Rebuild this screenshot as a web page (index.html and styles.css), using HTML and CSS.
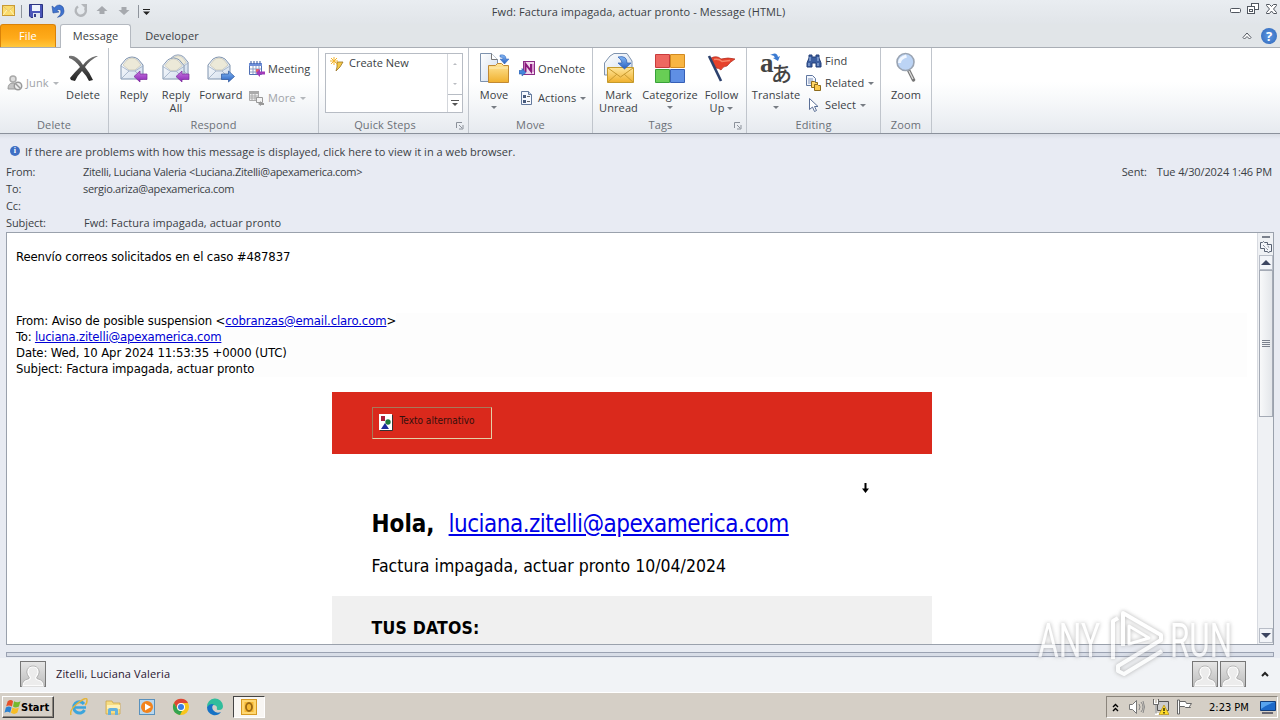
FILE: index.html
```html
<!DOCTYPE html>
<html lang="en">
<head>
    <meta charset="utf-8">
    <title>Fwd: Factura impagada, actuar pronto - Message (HTML)</title>
    <link rel="stylesheet" href="styles.css">
</head>
<body>
    <svg class="defs" width="0" height="0">
        <defs>
            <linearGradient id="paper" x1="0" y1="0" x2="1" y2="1"><stop offset="0" stop-color="#fff"/><stop offset="1" stop-color="#cfdcec"/></linearGradient>
            <linearGradient id="gold" x1="0" y1="0" x2="0" y2="1"><stop offset="0" stop-color="#ffe69a"/><stop offset="1" stop-color="#f0b02d"/></linearGradient>
            <linearGradient id="purple" x1="0" y1="0" x2="0" y2="1"><stop offset="0" stop-color="#c77be0"/><stop offset="1" stop-color="#8a22b5"/></linearGradient>
            <linearGradient id="blue" x1="0" y1="0" x2="0" y2="1"><stop offset="0" stop-color="#84b8f5"/><stop offset="1" stop-color="#2860c0"/></linearGradient>
            <linearGradient id="ink" x1="0" y1="0" x2="0" y2="1"><stop offset="0" stop-color="#777"/><stop offset="1" stop-color="#222"/></linearGradient>
            <linearGradient id="grey" x1="0" y1="0" x2="0" y2="1"><stop offset="0" stop-color="#e6e6e6"/><stop offset="1" stop-color="#bdbdbd"/></linearGradient>
            <symbol id="open-mail" viewBox="0 0 24 24">
                <path d="M1 9 6 3Q12-1 18 3l5 6v14H1z" fill="url(#paper)" stroke="#7f93ae"/>
                <path d="M3 9 7 4q5-4 10 0l4 5-6 5H9z" fill="#ece9d8" stroke="#bdbba9" stroke-width=".6"/>
                <path d="M1 10l8 5h6l8-5M1 23l8-8M23 23l-8-8" fill="none" stroke="#9cacc3" stroke-width=".8"/>
            </symbol>
            <symbol id="person" viewBox="0 0 26 26">
                <rect x=".5" y=".5" width="25" height="25" fill="url(#grey)" stroke="#777"/>
                <path d="M2.500 25q0-5 6-6.500c2-.5 2-2 .8-3.500-3-4-1.500-9.500 3.700-9.500s6.700 5.500 3.700 9.500c-1.200 1.500-1.200 3 .8 3.500q6 1.500 6 6.500z" fill="#ececec" stroke="#fff" stroke-width="1.500"/>
                <path d="M2 25q0-5.500 6-7c2-.5 1.500-1.500.3-3-3-4-1-10 4.700-10s7.700 6 4.700 10c-1.200 1.500-1.700 2.500.3 3q6 1.500 6 7" fill="none" stroke="#999" stroke-width=".7"/>
            </symbol>
            <symbol id="launcher" viewBox="0 0 8 8">
                <path d="M.5 6V.5H6M3 3l3 3M7 3v4H3" fill="none" stroke="#8b919a"/>
            </symbol>
        </defs>
    </svg>

    <div class="window">
        <header class="titlebar">
            <div class="quick-access">
                <svg width="16" height="14" viewBox="0 0 16 14"><rect x="2.500" y="1.500" width="12" height="10" fill="#fbdc6c" stroke="#c99a32"/><path d="M3 2l5.500 5L14 2M3 11l4-5M14 11l-4-5" fill="none" stroke="#fff3bd"/><path d="M3 2l5.500 5L14 2" fill="none" stroke="#cf9d35" stroke-width=".6"/></svg>
                <i class="divider"></i>
                <svg class="save" width="14" height="14" viewBox="0 0 14 14"><path d="M.5.5h13v13H2l-1.500-1.500z" fill="#4a55b8" stroke="#2b3481"/><path d="M3 1h8v6H3z" fill="#eef3fc"/><path d="M4 9h7v5H4z" fill="#dfe5ef"/><path d="M5 10h2v3H5z" fill="#333c87"/></svg>
                <svg class="undo" width="14" height="14" viewBox="0 0 14 14"><path d="M1 2l1 7 6-1-2.300-1.700Q10 4 10 8q0 3-3.500 5.300Q13 12 13 7q0-5-4-6-3-.6-5.600 2.800z" fill="#3f73cf" stroke="#2a50a0" stroke-width=".6"/></svg>
                <svg class="redo" width="14" height="14" viewBox="0 0 14 14"><path d="M4 2.500A5 5 0 1 0 11 4" fill="none" stroke="#b3b6ba" stroke-width="2.500"/><path d="M7 0h6v6z" fill="#b3b6ba"/></svg>
                <svg class="up" width="12" height="12" viewBox="0 0 12 12"><path d="M6 1l5.500 5H8.500v3h-5V6H.5z" fill="#a6a9ae"/></svg>
                <svg class="down" width="12" height="12" viewBox="0 0 12 12"><path d="M6 10l5.500-5H8.500V2h-5v3H.5z" fill="#a6a9ae"/></svg>
                <i class="divider"></i>
                <svg class="customize" width="7" height="6" viewBox="0 0 7 6"><path d="M0 0h7v1H0zM0 2.500h7L3.500 6z" fill="#222"/></svg>
            </div>
            <h1 class="caption">Fwd: Factura impagada, actuar pronto - Message (HTML)</h1>
            <div class="window-buttons">
                <svg width="47" height="12" viewBox="0 0 47 12" fill="#fff" stroke="#50565f"><rect x=".5" y="5.500" width="10" height="4" rx="1"/><rect x="21.500" y=".5" width="7" height="6"/><rect x="17.500" y="3.500" width="7" height="7"/><rect x="19.500" y="6.500" width="3" height="2"/><path d="M36.500 1.500h3l2 2 2-2h3v1l-3 3.500 3 3.500v1h-3l-2-2.500-2 2.500h-3v-1l3-3.500-3-3.500z"/></svg>
            </div>
        </header>

        <nav class="tabs">
            <a class="tab file">File</a>
            <a class="tab active">Message</a>
            <a class="tab developer">Developer</a>
            <div class="tab-tools">
                <svg width="10" height="8" viewBox="0 0 10 8"><path d="M1 5.500 5 1l4 4.500-1.500 1.500L5 4.500 2.500 7z" fill="#fff" stroke="#50565f"/></svg>
                <span class="help">?</span>
            </div>
        </nav>

        <section class="ribbon">
            <div class="group g-delete">
                <div class="tools">
                    <div class="stack single">
                        <div class="small disabled">
                            <svg width="16" height="16" viewBox="0 0 16 16"><circle cx="6" cy="4" r="3" fill="#ddd" stroke="#aaa" stroke-width="1.500"/><path d="M1 14q0-6 5-6t5 6z" fill="#c4c4c4" stroke="#999"/><circle cx="11" cy="11" r="3.700" fill="#eee" stroke="#999" stroke-width="1.500"/><path d="M8.500 8.500l5 5" stroke="#999" stroke-width="1.500"/></svg>
                            <span>Junk</span><i class="caret"></i>
                        </div>
                    </div>
                    <div class="big w-delete">
                        <svg width="32" height="32" viewBox="0 0 32 32"><path d="M2 4q4-1 8 2 4 3 6 7 5-7 13-9h2Q23 8 18 15q5 6 8 13l-4 1q-3-6-7-10-5 5-7 10l-4-1-1-2Q7 21 13 15 8 8 2 6z" fill="url(#ink)"/></svg>
                        <span>Delete</span>
                    </div>
                </div>
                <h2>Delete</h2>
            </div>

            <div class="group g-respond">
                <div class="tools">
                    <div class="big w-reply">
                        <svg width="32" height="32" viewBox="0 0 32 32"><use href="#open-mail" x="2" y="4" width="24" height="24"/><path d="M16 24.500l6-5.500v3h7v5.500h-7V30z" fill="url(#purple)" stroke="#7a2b9a" stroke-width=".7"/></svg>
                        <span>Reply</span>
                    </div>
                    <div class="big w-all">
                        <svg width="32" height="32" viewBox="0 0 32 32"><use href="#open-mail" x="7" y="2" width="22" height="22"/><use href="#open-mail" x="2" y="5" width="23" height="23"/><path d="M16 24.500l6-5.500v3h7v5.500h-7V30z" fill="url(#purple)" stroke="#7a2b9a" stroke-width=".7"/></svg>
                        <span>Reply<br>All</span>
                    </div>
                    <div class="big w-forward">
                        <svg width="32" height="32" viewBox="0 0 32 32"><use href="#open-mail" x="2" y="4" width="24" height="24"/><path d="M29.500 24.500l-6-5.500v3h-7v5.500h7V30z" fill="url(#blue)" stroke="#2c5499" stroke-width=".7"/></svg>
                        <span>Forward</span>
                    </div>
                    <div class="stack double">
                        <div class="small">
                            <svg width="16" height="16" viewBox="0 0 16 16"><path d="M.5 2.500h12v11H.5z" fill="#fff" stroke="#5070b4"/><path d="M0 2h13v3H0z" fill="#6f8fd8"/><path d="M2 0v3M5 0v3M8 0v3M11 0v3" stroke="#34549b"/><path d="M1 8h11M1 11h9M4 5v8M7 5v8M10 5v5" stroke="#8ea0c5"/><path d="M7 8h3v3H7z" fill="#e0626a"/><path d="M7 12l4-4v2.500h5v3h-5V16z" fill="#a23bb8"/></svg>
                            <span>Meeting</span>
                        </div>
                        <div class="small disabled">
                            <svg width="16" height="16" viewBox="0 0 16 16"><path d="M.5 2.500h9v8h-9z" fill="#eee" stroke="#aaa"/><path d="M0 1h10v3H0z" fill="#aaa"/><path d="M1 6h8M1 8h8M3 4v6M6 4v6" stroke="#aaa"/><path d="M7.500 7.500h6v5h-6z" fill="#f3f3f3" stroke="#999"/><path d="M9 14l3-3v2h3v2h-3v1z" fill="#999"/></svg>
                            <span>More</span><i class="caret"></i>
                        </div>
                    </div>
                </div>
                <h2>Respond</h2>
            </div>

            <div class="group g-steps">
                <div class="tools">
                    <div class="gallery">
                        <div class="gallery-item">
                            <svg width="14" height="14" viewBox="0 0 14 14"><path d="M7 5h6l-3 5-4 4 1-4z" fill="#f6c948" stroke="#9b7424" stroke-width=".8"/><path d="M4 0v8M0 4h8M1 1l6 6M7 1L1 7" stroke="#f3b42d"/></svg>
                            <span>Create New</span>
                        </div>
                        <div class="gallery-scroll"><i class="arrow-up"></i><i class="arrow-down"></i><i class="arrow-more"></i></div>
                    </div>
                </div>
                <h2>Quick Steps</h2>
                <svg class="launcher" width="8" height="8"><use href="#launcher"/></svg>
            </div>

            <div class="group g-move">
                <div class="tools">
                    <div class="big w-reply">
                        <svg width="32" height="32" viewBox="0 0 32 32"><path d="M2.500 1.500h11l6 6v22h-17z" fill="url(#paper)" stroke="#7d92ae"/><path d="M13.500 1.500v6h6" fill="#fff" stroke="#777"/><path d="M10.500 13.500h7l2-2h4l2 2h5v17h-20z" fill="url(#gold)" stroke="#c18933"/><path d="M11 16h19" stroke="#ffedb7"/><path d="M22 3q6-1 6 4h3l-4.500 5L22 7h3q0-2-3-2z" fill="url(#blue)" stroke="#2d61b8" stroke-width=".5"/></svg>
                        <span>Move</span><i class="caret"></i>
                    </div>
                    <div class="stack double">
                        <div class="small">
                            <svg width="16" height="16" viewBox="0 0 16 16"><rect x="4.500" y=".5" width="11" height="13" fill="#f2d6ec" stroke="#8c2d86"/><path d="M6.500 11V3L12 10V3" fill="none" stroke="#8b197d" stroke-width="2"/><path d="M14 3v8" stroke="#bd5bb5"/><path d="M0 9.500h3V7.500l4 4L3 15v-2H0z" fill="#4585db" stroke="#285baa" stroke-width=".6"/></svg>
                            <span>OneNote</span>
                        </div>
                        <div class="small">
                            <svg width="16" height="16" viewBox="0 0 16 16"><path d="M2.500 1.500h7l3 3v10h-10z" fill="#f6f9ff" stroke="#63799c"/><path d="M4 5h3v3H4zM4 10h3v3H4z" fill="#485b7d"/><path d="M8 6.500h3M8 11.500h3" stroke="#666"/><path d="M9.500 1.500v3h3" fill="#c3d3ea" stroke="#63799c"/></svg>
                            <span>Actions</span><i class="caret"></i>
                        </div>
                    </div>
                </div>
                <h2>Move</h2>
            </div>

            <div class="group g-tags">
                <div class="tools">
                    <div class="big w-unread">
                        <svg width="32" height="32" viewBox="0 0 32 32"><path d="M1.500 11 7 4l4-2.500h13l5 7.500v14h-27.500z" fill="url(#paper)" stroke="#7f93ae"/><path d="M4.500 15.500h26v15h-26z" fill="url(#gold)" stroke="#c59a2b"/><path d="M5 16l12.500 9L30 16M5 30l9-8M30 30l-9-8" fill="none" stroke="#c99b31"/><path d="M15 5q9-2 9 6h4l-6.500 6L15 11h4q0-3-4-6z" fill="url(#blue)" stroke="#2b5cb0" stroke-width=".7"/></svg>
                        <span>Mark<br>Unread</span>
                    </div>
                    <div class="big w-categorize">
                        <svg width="32" height="32" viewBox="0 0 32 32"><path d="M1.500 2.500h14v13h-14z" fill="#ee6861" stroke="#c93c3c"/><path d="M16.500 2.500h14v13h-14z" fill="#f8b543" stroke="#d28a20"/><path d="M1.500 17.500h14v13h-14z" fill="#68ce55" stroke="#38a13a"/><path d="M16.500 17.500h14v13h-14z" fill="#5f8fe4" stroke="#355fb6"/></svg>
                        <span>Categorize</span><i class="caret"></i>
                    </div>
                    <div class="big w-unread">
                        <svg width="32" height="32" viewBox="0 0 32 32"><path d="M5 6q6-3 10 1 7-2 14 0-5 3-8 7-4 0-6 4-2-2-5-2z" fill="#e6422c" stroke="#ae2a1c" stroke-width=".7"/><path d="M8 7.500q5-1 8 2l8-1" fill="none" stroke="#f7866a" stroke-width="1.500"/><path d="M3 4l12 25" stroke="#2c416d" stroke-width="2.600"/></svg>
                        <span>Follow<br>Up <i class="caret"></i></span>
                    </div>
                </div>
                <h2>Tags</h2>
                <svg class="launcher" width="8" height="8"><use href="#launcher"/></svg>
            </div>

            <div class="group g-editing">
                <div class="tools">
                    <div class="big w-translate">
                        <svg class="translate" width="32" height="32" viewBox="0 0 32 32"><text class="latin" x="0" y="20">a</text><text class="kana" x="11" y="29">あ</text><path d="M10 3q7-4 8 2l2-1-2 5-5-3 2-.5q-1-3-5-2.500z" fill="#3b7bd2"/></svg>
                        <span>Translate</span><i class="caret"></i>
                    </div>
                    <div class="stack triple">
                        <div class="small">
                            <svg width="16" height="16" viewBox="0 0 16 16"><path d="M3 2h3v2h4V2h3v3l2 5v4h-5v-4H6v4H1v-4l2-5z" fill="#3c5e9f" stroke="#233f78"/><path d="M4 4v4M12 4v4M3 10v3M12 10v3" stroke="#a9c4ee"/></svg>
                            <span>Find</span>
                        </div>
                        <div class="small">
                            <svg width="16" height="16" viewBox="0 0 16 16"><path d="M.5.5h6l3 3v7h-9z" fill="#f2f6fd" stroke="#6077a0"/><path d="M2 4h5M2 6h5M2 8h5" stroke="#7c91b8"/><path d="M5.500 6.500h3l1 1h2v5h-6z" fill="#ffd668" stroke="#8c6a1b"/><path d="M8.500 9.500h3l1 1h2v5h-6z" fill="#fbc94c" stroke="#8c6a1b"/></svg>
                            <span>Related</span><i class="caret"></i>
                        </div>
                        <div class="small">
                            <svg width="16" height="16" viewBox="0 0 16 16"><path d="M3.500 1.500v11l3-2.500 2 4.500 2-1-2-4h3.500z" fill="#fff" stroke="#5a6f96"/></svg>
                            <span>Select</span><i class="caret"></i>
                        </div>
                    </div>
                </div>
                <h2>Editing</h2>
            </div>

            <div class="group g-zoom">
                <div class="tools">
                    <div class="big w-zoom">
                        <svg width="32" height="32" viewBox="0 0 32 32"><path d="M18.500 18l5 10" stroke="#777" stroke-width="3.500" stroke-linecap="round"/><path d="M19 19l4 8" stroke="#ddd" stroke-width="1.200"/><circle cx="15.500" cy="10" r="8.500" fill="#bcd4f5" stroke="#9aa4b2" stroke-width="1.600"/><path d="M9.500 11q0-5 7-7" fill="none" stroke="#f1f7ff" stroke-width="3"/></svg>
                        <span>Zoom</span>
                    </div>
                </div>
                <h2>Zoom</h2>
            </div>
        </section>

        <section class="headers">
            <div class="infobar"><span class="info">i</span><span>If there are problems with how this message is displayed, click here to view it in a web browser.</span></div>
            <dl>
                <dt>From:</dt><dd class="sender">Zitelli, Luciana Valeria &lt;Luciana.Zitelli@apexamerica.com&gt;</dd>
                <dt>To:</dt><dd class="recipient">sergio.ariza@apexamerica.com</dd>
                <dt>Cc:</dt><dd></dd>
                <dt>Subject:</dt><dd class="subject">Fwd: Factura impagada, actuar pronto</dd>
            </dl>
            <div class="sent"><span>Sent:</span><span>Tue 4/30/2024 1:46 PM</span></div>
        </section>

        <main class="message">
            <div class="message-body">
                <p class="intro">Reenvío correos solicitados en el caso #487837</p>
                <div class="forwarded">
                    <p><span class="mask">From: Aviso de posible suspension &lt;<a>cobranzas@email.claro.com</a>&gt;</span></p>
                    <p><span class="mask fw-to">To: <a>luciana.zitelli@apexamerica.com</a></span></p>
                    <p><span class="mask">Date: Wed, 10 Apr 2024 11:53:35 +0000 (UTC)</span></p>
                    <p><span class="mask">Subject: Factura impagada, actuar pronto</span></p>
                </div>
                <div class="letter">
                    <div class="banner">
                        <div class="alt-image">
                            <svg width="14" height="17" viewBox="0 0 14 17"><path d="M0 0h13v16H0z" fill="#fff"/><path d="M13.500 1v15.500H1" fill="none" stroke="#333"/><path d="M2 2h4v5H2z" fill="#a8203a"/><circle cx="9" cy="8" r="2.700" fill="#1e7a3c"/><path d="M6 9l4 6H2z" fill="#1c2b9b"/></svg>
                            <span>Texto alternativo</span>
                        </div>
                    </div>
                    <p class="greeting"><b>Hola,</b><a>luciana.zitelli@apexamerica.com</a></p>
                    <p class="notice">Factura impagada, actuar pronto 10/04/2024</p>
                    <div class="data"><b>TUS DATOS:</b></div>
                </div>
            </div>
            <div class="scrollbar">
                <i class="split"></i>
                <svg class="select-object" width="14" height="14" viewBox="0 0 14 14"><path d="M1.500 2.500h2l1-1 1 1h3v2h4v7h-2l-1 1.500-1-1.500h-3v-3h-4z" fill="#f3f5f9" stroke="#596273"/><path d="M4 5l5 5M8 4l2 4" stroke="#596273" stroke-dasharray="1 1"/></svg>
                <i class="sb-button"><i class="sb-up"></i></i>
                <i class="thumb"><i class="grip"></i></i>
                <i class="sb-button last"><i class="sb-down"></i></i>
            </div>
        </main>

        <div class="splitter"></div>

        <footer class="people">
            <svg width="26" height="26"><use href="#person"/></svg>
            <span class="person-name">Zitelli, Luciana Valeria</span>
            <div class="people-right">
                <svg width="26" height="26"><use href="#person"/></svg>
                <svg width="26" height="26"><use href="#person"/></svg>
                <svg class="expand" width="8" height="6" viewBox="0 0 8 6"><path d="M1 5l3-3 3 3" fill="none" stroke="#222" stroke-width="2"/></svg>
            </div>
        </footer>

        <footer class="taskbar">
            <div class="start">
                <svg width="17" height="16" viewBox="0 0 15 15"><path d="M3 2q3-2 5 0L7 7Q4 5 1.500 7z" fill="#e65129"/><path d="M9 2q3 2 6 0l-1.500 5Q10 9 8 7z" fill="#75b82d"/><path d="M1.300 8q3-2 5.300 0l-1.300 5Q3 11 0 13z" fill="#2c82d1"/><path d="M7.500 8q3 2 6 0L12 13q-3 2-6 0z" fill="#f7bd26"/></svg>
                <b>Start</b>
            </div>
            <div class="task-icons">
                <svg width="18" height="18" viewBox="0 0 18 18"><path d="M14 6A5.700 5.700 0 1 0 14.500 12" fill="none" stroke="#3ba5dc" stroke-width="3"/><path d="M4 9.500h12" stroke="#3ba5dc" stroke-width="2.500"/><path d="M1 17Q-1 12 8 5t9-3-2 5" fill="none" stroke="#e5b53a" stroke-width="1.500"/></svg>
                <svg width="18" height="18" viewBox="0 0 18 18"><path d="M2 3h6l1 2h7v11H2z" fill="#f6dd83" stroke="#cda64a" stroke-width=".8"/><path d="M3 7h13v4H3z" fill="#fff1b6"/><path d="M4 17v-5q0-2 2-2h6q2 0 2 2v5h-3v-4H7v4z" fill="#64b1dd"/></svg>
                <svg width="18" height="18" viewBox="0 0 18 18"><rect x="1.500" y="1.500" width="15" height="15" fill="#b9d7ee" stroke="#5991bd"/><circle cx="9" cy="9" r="6" fill="#f2831d"/><path d="M7 5.500v7l6-3.500z" fill="#fff"/></svg>
                <svg width="18" height="18" viewBox="0 0 18 18"><circle cx="9" cy="9" r="8" fill="#f8c51c"/><path d="M2 5a8 8 0 0 1 14 0H9L5.500 11z" fill="#de4636"/><path d="M2 5l4 7 4 1-2 4A8 8 0 0 1 2 5z" fill="#33a451"/><circle cx="9" cy="9" r="4" fill="#fff"/><circle cx="9" cy="9" r="3" fill="#397ee4"/></svg>
                <svg width="18" height="18" viewBox="0 0 18 18"><path d="M1 9A8 8 0 0 1 17 8q0 4-4 4-3 0-2-2 0-3-4-3-4 0-6 2z" fill="#31bd9c"/><path d="M1 9q3-4 7-2.500Q5 8 7 12q3 4 8 2Q12 18 7 17 1 15 1 9z" fill="#1672c5"/></svg>
                <div class="task-active">
                    <svg width="18" height="18" viewBox="0 0 18 18"><rect x="1.500" y="1.500" width="15" height="15" fill="#ffd771" stroke="#d79a22"/><rect x="4.500" y="4" width="9" height="10" fill="#f6b934"/><ellipse cx="9" cy="9" rx="3" ry="4" fill="none" stroke="#9b6814" stroke-width="1.800"/></svg>
                </div>
            </div>
            <div class="tray">
                <svg class="t-chevron" width="7" height="9" viewBox="0 0 7 9"><path d="M1 4l2.500-2.500L6 4M1 8l2.500-2.500L6 8" fill="none" stroke="#000" stroke-width="1.400"/></svg>
                <svg class="t-volume" width="16" height="14" viewBox="0 0 16 14"><path d="M.5 4.500h3l4-4v13l-4-4h-3z" fill="#fff" stroke="#777"/><path d="M10 4q2 3 0 6M12 2q4 5 0 10M14 1q3 6 0 12" fill="none" stroke="#888"/></svg>
                <svg class="t-network" width="16" height="16" viewBox="0 0 16 16"><path d="M4.500 2.500h11v9h-11z" fill="#ccc" stroke="#555"/><path d="M1 1v4h4V1M3 5v10h5" fill="none" stroke="#fff" stroke-width="2"/><path d="M.5 0v5.500h5V0M3 6v8.500" fill="none" stroke="#444" stroke-width=".8"/><path d="M11 6l5 9.500H6z" fill="#ffdc27" stroke="#b38c12" stroke-width=".7"/><path d="M11 9v3M11 13v1.500" stroke="#000" stroke-width="1.200"/></svg>
                <svg class="t-flag" width="16" height="16" viewBox="0 0 16 16"><path d="M.5 1v14h2V1z" fill="#fff" stroke="#666"/><path d="M2.500 2.500h6l1 2h5l-2 3 1 1h-5l-1-1h-5z" fill="#fff" stroke="#666"/></svg>
                <span class="clock">2:23 PM</span>
                <svg class="t-desktop" width="16" height="13" viewBox="0 0 16 13"><path d="M.5.500h15v9H.5z" fill="#1c69c9" stroke="#123d7a"/><path d="M1 1h14Q8 3 1 8z" fill="#57a3ee"/><path d="M2 12h11" stroke="#445" stroke-width="1.500"/></svg>
            </div>
        </footer>

        <svg class="pointer" width="7" height="10" viewBox="0 0 7 10"><path d="M2.500 0h2v5.500H7L3.500 10 0 5.500h2.500z" fill="#000"/></svg>

        <svg class="watermark" width="200" height="76" viewBox="0 0 200 76">
            <text x="2" y="51" textLength="62" lengthAdjust="spacingAndGlyphs">ANY</text>
            <path d="M82 12l-5 3v38" class="mark"/>
            <path d="M87 40V7l38 22v5L82 60v5l6 3 38-23" class="mark"/>
            <path d="M93 38V20l20 12z" class="mark thin"/>
            <text x="134" y="51" textLength="62" lengthAdjust="spacingAndGlyphs">RUN</text>
        </svg>
    </div>
</body>
</html>
```

FILE: styles.css
```css
* {
    box-sizing: border-box;
}
body {
    margin: 0;
    background-color: #e8ebf2;
    color: #3b3f45;
    font: 11px "Segoe UI", "Open Sans", sans-serif;
}
h1, h2, p, dl, dd {
    margin: 0;
    font-weight: normal;
}
svg {
    display: block;
    flex: none;
}
i {
    display: block;
    flex: none;
}
.defs {
    position: absolute;
}
.window {
    position: relative;
    display: flex;
    flex-direction: column;
    width: 1280px;
    height: 720px;
    overflow: hidden;
}

/* title bar */
.titlebar {
    display: grid;
    grid-template-columns: 240px 1fr 240px;
    height: 24px;
    background: linear-gradient(#e9edf1, #e1e5e9);
}
.quick-access {
    display: flex;
    align-items: center;
    height: 22px;
}
.divider {
    width: 1px;
    height: 13px;
    margin-left: 5px;
    background-color: #8e949c;
}
.save { margin-left: 7px; }
.undo { margin-left: 8px; }
.redo { margin-left: 9px; }
.up { margin-left: 8px; }
.down { margin-left: 10px; }
.quick-access .down + .divider { margin-left: 8px; }
.customize { margin: 2px 0 0 4px; }
.caption {
    font-size: 11px;
    line-height: 24px;
    text-align: center;
    letter-spacing: 0.1px;
    white-space: nowrap;
    padding-right: 3px;
}
.window-buttons {
    display: flex;
    justify-content: flex-end;
    padding: 3px 3px 0 0;
}

/* tabs */
.tabs {
    display: flex;
    height: 24px;
    border-bottom: 1px solid #a9aeb5;
    background: #e1e5e8;
}
.tab {
    height: 23px;
    line-height: 23px;
    text-align: center;
    letter-spacing: 0.1px;
}
.tab.file {
    width: 56px;
    border: 1px solid #d98209;
    border-bottom: 0;
    border-radius: 3px 3px 0 0;
    background: linear-gradient(#f79c0c, #ffab1a 60%, #ffc83e);
    color: #fff;
    line-height: 21px;
}
.tab.active {
    width: 71px;
    height: 24px;
    margin-left: 4px;
    border: 1px solid #b4b9c0;
    border-bottom: 0;
    border-radius: 3px 3px 0 0;
    background: #fff;
    line-height: 21px;
}
.tab.developer {
    width: 82px;
}
.tab-tools {
    display: flex;
    align-items: center;
    gap: 9px;
    margin-left: auto;
    padding-right: 3px;
}
.help {
    width: 16px;
    height: 16px;
    border-radius: 50%;
    background: radial-gradient(#5d97e2, #2e66b9);
    color: #fff;
    font-size: 13px;
    font-weight: bold;
    line-height: 16px;
    text-align: center;
}

/* ribbon */
.ribbon {
    display: flex;
    height: 86px;
    border-bottom: 1px solid #8b919b;
    background: linear-gradient(#fff 40%, #f5f7f9 65%, #e6eaef);
}
.group {
    position: relative;
    display: flex;
    flex-direction: column;
    border-right: 1px solid #c0c5cc;
}
.group h2 {
    height: 16px;
    font-size: 11px;
    line-height: 15px;
    text-align: center;
    color: #6b7077;
    letter-spacing: 0.15px;
}
.g-delete { width: 109px; }
.g-respond { width: 210px; }
.g-steps { width: 150px; }
.g-steps h2 { padding-right: 17px; }
.g-move { width: 124px; }
.g-tags { width: 154px; }
.g-tags h2 { padding-right: 18px; }
.g-editing { width: 134px; }
.g-zoom { width: 51px; }
.tools {
    display: flex;
    height: 69px;
    padding: 4px 0 0 5px;
}
.g-editing .tools { padding-left: 3px; }
.g-zoom .tools { padding-left: 0; }
.big {
    display: flex;
    flex-direction: column;
    align-items: center;
    line-height: 13px;
    text-align: center;
    white-space: nowrap;
    letter-spacing: 0.1px;
}
.big > span {
    margin-top: 4px;
}
.big > .caret {
    margin-top: 5px;
}
.w-delete { width: 42px; }
.w-reply { width: 40px; }
.w-all { width: 44px; }
.w-forward { width: 46px; }
.w-unread { width: 41px; }
.w-categorize { width: 62px; }
.w-translate { width: 52px; }
.w-zoom { width: 50px; }
.caret {
    border: 3px solid transparent;
    border-top-color: #777c83;
    border-bottom: 0;
}
.big span .caret {
    display: inline-block;
    vertical-align: 2px;
}
.stack {
    display: flex;
    flex-direction: column;
    margin-left: 5px;
}
.single { width: 55px; margin-left: 2px; padding-top: 23px; }
.double { gap: 13px; padding-top: 9px; }
.triple { gap: 6px; padding-top: 1px; margin-left: 4px; }
.small {
    display: flex;
    align-items: center;
    height: 16px;
    white-space: nowrap;
    letter-spacing: 0.1px;
}
.small span {
    margin: -2px 0 0 3px;
}
.small .caret {
    margin-left: 4px;
}
.disabled {
    color: #a0a3a8;
}
.disabled .caret {
    border-top-color: #b4b7bb;
}
.translate, .watermark {
    overflow: visible;
}
.latin {
    font: bold 27px "Liberation Serif", serif;
    letter-spacing: 0;
    fill: #444;
}
.kana {
    font: 500 21px "Noto Sans CJK JP", sans-serif;
    letter-spacing: 0;
    fill: #444;
}
.gallery {
    display: flex;
    width: 138px;
    height: 60px;
    margin-top: 1px;
    margin-left: 1px;
    border: 1px solid #b7bcc4;
    background: #fff;
}
.gallery-item {
    display: flex;
    flex: 1;
    gap: 5px;
    padding: 3px 0 0 4px;
    line-height: 12px;
}
.gallery-scroll {
    display: grid;
    grid-template-rows: 20px 20px 18px;
    width: 15px;
    border-left: 1px solid #d3d6db;
    justify-items: center;
    align-items: center;
}
.arrow-up, .arrow-down {
    border: 2px solid transparent;
    border-bottom-color: #b9bcc1;
    border-top: 0;
}
.arrow-down {
    border-top: 2px solid #b9bcc1;
    border-bottom: 0;
}
.arrow-more {
    position: relative;
    width: 100%;
    height: 100%;
    border-top: 1px solid #b7bcc4;
}
.arrow-more::before {
    content: "";
    position: absolute;
    left: 4px;
    top: 8px;
    border: 3px solid transparent;
    border-top-color: #555;
    border-bottom: 0;
}
.arrow-more::after {
    content: "";
    position: absolute;
    left: 3px;
    top: 5px;
    width: 8px;
    height: 1px;
    background: #555;
}
.launcher {
    position: absolute;
    right: 4px;
    bottom: 3px;
}

/* message headers */
.headers {
    position: relative;
    height: 98px;
    padding: 9px 0 0 6px;
    background: linear-gradient(#d9dde5, #e8ebf3 5px);
}
.infobar {
    display: flex;
    align-items: center;
    gap: 5px;
    height: 16px;
    padding-left: 4px;
    letter-spacing: 0.04px;
}
.info {
    width: 10px;
    height: 10px;
    border-radius: 50%;
    background: #3f6fc4;
    color: #fff;
    font: bold 8px/10px "Liberation Serif", serif;
    text-align: center;
}
.headers dl {
    display: grid;
    grid-template-columns: 77px 1fr;
    margin-top: 4px;
    grid-auto-rows: 17px;
    line-height: 17px;
}
.sender, .recipient {
    letter-spacing: -0.3px;
}
.subject {
    padding-left: 1px;
    letter-spacing: 0.06px;
}
.headers dt {
    letter-spacing: -0.1px;
}
.sent {
    position: absolute;
    right: 8px;
    top: 29px;
    display: flex;
    gap: 10px;
    line-height: 17px;
    letter-spacing: -0.13px;
}

/* message */
.message {
    display: flex;
    height: 413px;
    margin: 0 6px;
    border: 1px solid #9aa1ac;
    background: #fff;
    overflow: hidden;
}
.message-body {
    flex: 1;
    padding: 16px 10px 0 9px;
    color: #000;
    font: 13px/16px Tahoma, "DejaVu Sans Condensed", "DejaVu Sans", sans-serif;
    font-stretch: condensed;
    letter-spacing: -0.13px;
    white-space: nowrap;
    overflow: hidden;
}
.message-body a {
    color: #0000d4;
    text-decoration: underline;
}
.forwarded {
    height: 64px;
    margin-top: 48px;
    background: #fdfdfd;
}
.mask {
    background: #fff;
}
.fw-to {
    letter-spacing: -0.21px;
}
.letter {
    width: 600px;
    margin: 15px auto 0;
    letter-spacing: 0;
}
.banner {
    height: 62px;
    padding: 15px 40px;
    background: #da291c;
}
.alt-image {
    display: flex;
    gap: 7px;
    width: 120px;
    height: 32px;
    padding: 6px;
    border: 1px solid #e4cfa6;
    border-top-color: #a7795a;
    border-left-color: #a7795a;
    font-size: 10px;
    line-height: 14px;
    color: #35100c;
}
.greeting {
    display: flex;
    gap: 14px;
    margin: 54px 0 0 40px;
    font-size: 24px;
    line-height: 32px;
}
.message-body .greeting a {
    color: #0000e8;
    letter-spacing: -0.52px;
}
.notice {
    margin: 14px 0 0 40px;
    font-size: 17.5px;
    line-height: 24px;
}
.data {
    height: 60px;
    margin-top: 18px;
    padding: 20px 40px;
    background: #f0f0f0;
    font-size: 17.5px;
    line-height: 24px;
    letter-spacing: 0.2px;
}
.scrollbar {
    display: flex;
    flex-direction: column;
    align-items: center;
    width: 16px;
    padding-top: 3px;
    border-left: 1px solid #d7dae0;
    background: #eff1f4;
}
.split {
    width: 8px;
    height: 2px;
    background: #7b818d;
}
.select-object {
    margin-top: 2px;
}
.sb-button {
    display: grid;
    place-items: center;
    width: 14px;
    height: 15px;
    margin-top: 1px;
    border: 1px solid #b8bdc7;
    background: #f2f4f8;
}
.sb-up, .sb-down {
    border: 5px solid transparent;
    border-bottom: 5px solid #3c4560;
    border-top: 0;
}
.sb-down {
    border-top: 5px solid #3c4560;
    border-bottom: 0;
}
.thumb {
    display: grid;
    place-items: center;
    width: 14px;
    height: 147px;
    border: 1px solid #a4aab5;
    background: linear-gradient(90deg, #f8f9fa, #e3e6ea);
}
.grip {
    width: 8px;
    height: 7px;
    background: repeating-linear-gradient(#7a808c 0 1px, transparent 1px 2px);
}
.last {
    margin-top: auto;
    margin-bottom: 1px;
}
.splitter {
    flex: none;
    height: 5px;
    margin: 7px 6px 1px;
    border: 1px solid #9ba2b2;
    background: #d8dde7;
}

/* people pane */
.people {
    display: flex;
    align-items: center;
    height: 34px;
    padding-left: 20px;
    padding-bottom: 2px;
    background: #f1f3f6;
}
.person-name {
    margin: -2px 0 0 10px;
    color: #2a1530;
    letter-spacing: 0.15px;
}
.people-right {
    display: flex;
    align-items: center;
    gap: 2px;
    margin-left: auto;
    padding-right: 11px;
}
.expand {
    margin-left: 13px;
}

/* taskbar */
.taskbar {
    display: flex;
    height: 28px;
    padding: 3px 2px 2px;
    border-top: 1px solid #fff;
    background: #d5cfc6;
    color: #000;
    font-family: Tahoma, "DejaVu Sans Condensed", "DejaVu Sans", sans-serif;
    font-stretch: condensed;
}
.start {
    display: flex;
    align-items: center;
    width: 52px;
    height: 22px;
    padding-left: 1px;
    border: 1px solid;
    border-color: #fff #444 #444 #fff;
    box-shadow: inset -1px -1px #8b857c;
}
.task-icons {
    display: flex;
    align-items: center;
    gap: 16px;
    height: 22px;
    margin-left: 16px;
}
.task-active {
    display: grid;
    place-items: center;
    width: 32px;
    height: 22px;
    margin-left: -7px;
    border: 1px solid;
    border-color: #444 #fff #fff #444;
    background: #f8f6f3;
}
.tray {
    display: flex;
    align-items: center;
    width: 172px;
    height: 22px;
    margin-left: auto;
    padding-left: 5px;
    border: 1px solid;
    border-color: #8b857c #fff #fff #8b857c;
}
.t-volume { margin-left: 10px; }
.t-network { margin-left: 8px; }
.t-flag { margin-left: 8px; }
.clock { margin-left: 16px; }
.t-desktop { margin-left: auto; margin-right: 1px; }

/* overlays */
.pointer {
    position: absolute;
    left: 862px;
    top: 483px;
}
.watermark {
    position: absolute;
    left: 1036px;
    top: 606px;
    opacity: 0.75;
    filter: drop-shadow(0 0 2px #999);
}
.watermark text {
    font: 400 48px Roboto, sans-serif;
    fill: #fff;
}
.mark {
    fill: none;
    stroke: #fff;
    stroke-width: 4;
    stroke-linejoin: round;
}
.thin {
    stroke-width: 3;
}
```
